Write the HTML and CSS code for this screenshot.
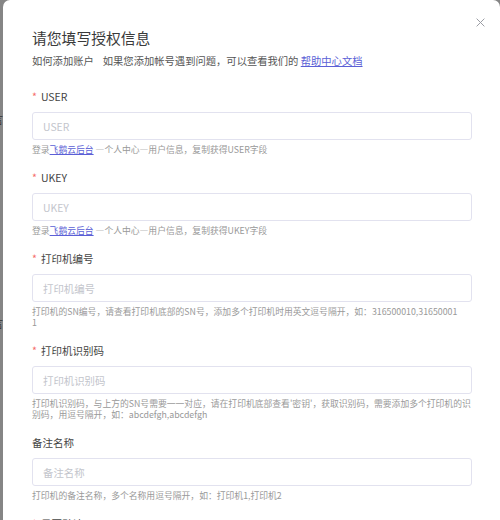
FILE: index.html
```html
<!DOCTYPE html>
<html lang="zh-CN">
<head>
<meta charset="utf-8">
<title>请您填写授权信息</title>
<link rel="stylesheet" href="styles.css">
</head>
<body>
<span class="under under-a">言</span>
<span class="under under-b">言</span>
<div class="modal">
  <button class="close" type="button" aria-label="关闭">
    <svg viewBox="0 0 10 10" width="9" height="9"><path d="M1 1L9 9M9 1L1 9" stroke="#9a9ca3" stroke-width="1.1" fill="none" stroke-linecap="round"/></svg>
  </button>
  <h2 class="title">请您填写授权信息</h2>
  <p class="subtitle">如何添加账户<span class="sub-gap">如果您添加帐号遇到问题，可以查看我们的 </span><a class="link" href="#">帮助中心文档</a></p>
  <form class="form">
    <div class="item">
      <label class="label"><span class="req">*</span>USER</label>
      <input class="input" placeholder="USER">
      <div class="help">登录<a class="link" href="#">飞鹅云后台</a> —个人中心—用户信息，复制获得USER字段</div>
    </div>
    <div class="item">
      <label class="label"><span class="req">*</span>UKEY</label>
      <input class="input" placeholder="UKEY">
      <div class="help">登录<a class="link" href="#">飞鹅云后台</a> —个人中心—用户信息，复制获得UKEY字段</div>
    </div>
    <div class="item">
      <label class="label"><span class="req">*</span>打印机编号</label>
      <input class="input" placeholder="打印机编号">
      <div class="help">打印机的SN编号，请查看打印机底部的SN号，添加多个打印机时用英文逗号隔开，如：316500010,31650001<br>1</div>
    </div>
    <div class="item">
      <label class="label"><span class="req">*</span>打印机识别码</label>
      <input class="input" placeholder="打印机识别码">
      <div class="help">打印机识别码，与上方的SN号需要一一对应，请在打印机底部查看'密钥'，获取识别码，需要添加多个打印机的识<br>别码，用逗号隔开，如：abcdefgh,abcdefgh</div>
    </div>
    <div class="item">
      <label class="label">备注名称</label>
      <input class="input" placeholder="备注名称">
      <div class="help">打印机的备注名称，多个名称用逗号隔开，如：打印机1,打印机2</div>
    </div>
    <div class="item">
      <label class="label"><span class="req">*</span>是否默认</label>
    </div>
  </form>
</div>
</body>
</html>
```
FILE: styles.css
```css
html, body {
  margin: 0;
  padding: 0;
  overflow: hidden;
  height: 520px;
}
body {
  background: #858585;
  font-family: "Noto Sans CJK SC", "Noto Sans", sans-serif;
  position: relative;
}
.under {
  position: absolute;
  left: -7px;
  font-size: 10px;
  line-height: 12px;
  color: #333;
}
.under-a { top: 114px; }
.under-b { top: 318px; }
.modal {
  position: relative;
  margin-left: 3px;
  width: 497px;
  min-height: 560px;
  box-sizing: border-box;
  background: #fff;
  border-radius: 7px 7px 0 0;
  padding: 27px 28px 0 29px;
}
.close {
  position: absolute;
  top: 18px;
  right: 15px;
  width: 9px;
  height: 9px;
  padding: 0;
  border: 0;
  background: none;
  display: flex;
}
.title {
  margin: 0;
  font-size: 14.8px;
  line-height: 22px;
  font-weight: 400;
  color: #3a3a3a;
}
.subtitle {
  margin: 4px 0 0;
  font-size: 10.3px;
  line-height: 16px;
  color: #555;
}
.sub-gap {
  margin-left: 9px;
}
.link {
  color: #5b5fd6;
  text-decoration: underline;
}
.form {
  margin-top: 20px;
}
.item {
  margin-bottom: 15px;
}
.label {
  display: block;
  font-size: 10.5px;
  line-height: 16px;
  color: #444;
  margin-bottom: 7px;
}
.req {
  color: #f56c6c;
  margin-right: 4px;
}
.input {
  display: block;
  width: 100%;
  height: 28px;
  box-sizing: border-box;
  border: 1px solid #e2e2ef;
  border-radius: 3px;
  padding: 0 10px;
  font-family: inherit;
  font-size: 10.4px;
  color: #333;
  background: #fff;
  outline: none;
}
.input::placeholder {
  color: #c3c5cc;
}
.help {
  margin-top: 4px;
  font-size: 8.8px;
  line-height: 11px;
  color: #999;
  white-space: nowrap;
}
```
